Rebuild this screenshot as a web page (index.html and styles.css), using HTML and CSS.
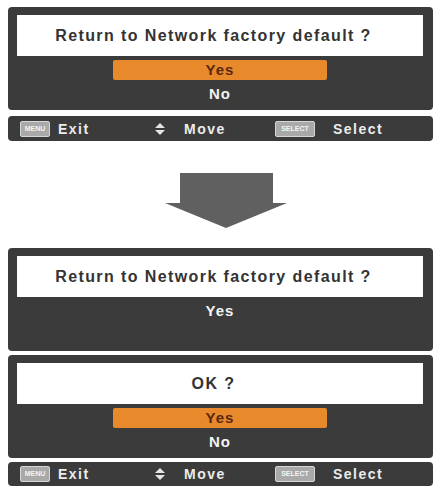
FILE: index.html
```html
<!DOCTYPE html>
<html>
<head>
    <title>Network factory default</title>
    <meta name="viewport" content="width=device-width, initial-scale=1.0">
    <link rel="stylesheet" href="styles.css">
</head>
<body>
    <!-- 第一步：确认对话框 -->
    <div class="panel first">
        <div class="question">Return to Network factory default ?</div>
        <div class="options">
            <div class="option selected">Yes</div>
            <div class="option">No</div>
        </div>
    </div>
    <div class="guide">
        <div class="guide-item"><span class="key">MENU</span>Exit</div>
        <div class="guide-item">
            <svg class="move-icon" width="10" height="12" viewBox="0 0 10 12">
                <polygon points="5,0 10,5 0,5" fill="#e6e6e6"/>
                <polygon points="0,7 10,7 5,12" fill="#e6e6e6"/>
            </svg>Move
        </div>
        <div class="guide-item"><span class="key">SELECT</span>Select</div>
    </div>

    <!-- 箭头 -->
    <div class="arrow-row">
        <svg width="122" height="55" viewBox="0 0 122 55">
            <polygon points="15,0 108,0 108,30 122,30 61,55 0,30 15,30" fill="#606060"/>
        </svg>
    </div>

    <!-- 第二步：再次确认 -->
    <div class="panel">
        <div class="question">Return to Network factory default ?</div>
        <div class="options">
            <div class="option">Yes</div>
            <div class="option"></div>
        </div>
    </div>
    <div class="panel second">
        <div class="question">OK ?</div>
        <div class="options">
            <div class="option selected">Yes</div>
            <div class="option">No</div>
        </div>
    </div>
    <div class="guide last">
        <div class="guide-item"><span class="key">MENU</span>Exit</div>
        <div class="guide-item">
            <svg class="move-icon" width="10" height="12" viewBox="0 0 10 12">
                <polygon points="5,0 10,5 0,5" fill="#e6e6e6"/>
                <polygon points="0,7 10,7 5,12" fill="#e6e6e6"/>
            </svg>Move
        </div>
        <div class="guide-item"><span class="key">SELECT</span>Select</div>
    </div>
</body>
</html>
```

FILE: styles.css
```css
/* 全局样式 */
body {
    margin: 0;
    padding: 7px 4px 0 8px;
    background-color: #fff;
    font-family: "Liberation Sans", Arial, sans-serif;
    font-weight: bold;
}

/* 对话框 */
.panel {
    background-color: #3b3b3b;
    border-radius: 4px;
    padding: 8px 10px 6px 9px;
}
.panel.second {
    margin-top: 4px;
}
.question {
    background-color: #fff;
    height: 41px;
    padding-right: 13px;
    display: flex;
    justify-content: center;
    align-items: center;
    color: #333;
    font-size: 16px;
    letter-spacing: 1.4px;
}
.options {
    display: flex;
    flex-direction: column;
    align-items: center;
    gap: 4px;
    padding-top: 4px;
}
.option {
    width: 214px;
    height: 20px;
    line-height: 20px;
    text-align: center;
    color: #f2f2f2;
    font-size: 15px;
    letter-spacing: 1px;
}
.option.selected {
    background-color: #e8892c;
    color: #5b2810;
    border-radius: 2px;
}

/* 底部操作提示 */
.guide {
    margin-top: 6px;
    height: 25px;
    background-color: #3b3b3b;
    border-radius: 4px;
    padding-left: 12px;
    display: grid;
    grid-template-columns: 135px 120px auto;
    align-items: center;
    color: #ececec;
    font-size: 14px;
    letter-spacing: 1.5px;
}
.guide.last {
    margin-top: 4px;
    height: 24px;
}
.guide-item {
    display: flex;
    align-items: center;
}
.key {
    display: inline-block;
    box-sizing: border-box;
    background-color: #a9a9a9;
    border: 1px solid #d6d6d6;
    color: #f4f4f4;
    font-size: 7px;
    letter-spacing: 0;
    line-height: 14px;
    height: 16px;
    width: 30px;
    border-radius: 2px;
    margin-right: 8px;
    text-align: center;
}
.guide-item:last-child .key {
    width: 40px;
    margin-right: 18px;
}
.move-icon {
    margin-right: 19px;
}

/* 箭头 */
.arrow-row {
    padding: 32px 0 20px 157px;
    height: 55px;
}
```
